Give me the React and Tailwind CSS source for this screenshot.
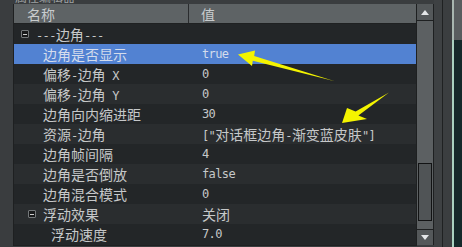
import React from "react";

const rows = [
  { name: "---边角---", value: "", indent: 22, toggle: 7, dark: true },
  { name: "边角是否显示", value: "true", indent: 29, selected: true },
  { name: "偏移-边角 X", value: "0", indent: 29, dark: true },
  { name: "偏移-边角 Y", value: "0", indent: 29 },
  { name: "边角向内缩进距", value: "30", indent: 29, dark: true },
  { name: "资源-边角", value: '["对话框边角-渐变蓝皮肤"]', indent: 29 },
  { name: "边角帧间隔", value: "4", indent: 29, dark: true },
  { name: "边角是否倒放", value: "false", indent: 29 },
  { name: "边角混合模式", value: "0", indent: 29, dark: true },
  { name: "浮动效果", value: "关闭", indent: 29, toggle: 14 },
  { name: "浮动速度", value: "7.0", indent: 37, dark: true },
];

// CJK runs get a wider font than the latin / digit runs
function T({ text }) {
  const parts = text.split(/([\u3000-\u9fff\uff00-\uffef]+)/).filter(Boolean);
  return (
    <span className="flex items-baseline whitespace-pre leading-none">
      {parts.map((p, i) =>
        /[\u3000-\u9fff\uff00-\uffef]/.test(p) ? (
          <span key={i} className="font-['Noto_Sans_CJK_SC',sans-serif] text-[14px] leading-none">
            {p}
          </span>
        ) : (
          <span
            key={i}
            className="font-['DejaVu_Sans_Mono',monospace] text-[12px] tracking-[-0.6px] leading-none"
          >
            {p}
          </span>
        )
      )}
    </span>
  );
}

function Minus() {
  return (
    <span className="w-[8px] h-[8px] border border-[#74787a] bg-[#18191a] rounded-[1px] flex items-center justify-center">
      <span className="w-[4px] h-[1px] bg-[#d0d0d0]" />
    </span>
  );
}

function Row({ row }) {
  const bg = row.selected ? "bg-[#5282d2]" : row.dark ? "bg-[#232628]" : "bg-[#2a2d2f]";
  const color = row.selected ? "text-[#d4dcec]" : "text-[#c6c8c9]";
  return (
    <div className={`relative h-[20px] flex items-center ${bg} ${color}`}>
      {row.toggle && (
        <span className="absolute top-[6px]" style={{ left: row.toggle }}>
          <Minus />
        </span>
      )}
      <div className="w-[188px] shrink-0 flex items-center" style={{ paddingLeft: row.indent }}>
        <T text={row.name} />
      </div>
      <T text={row.value} />
    </div>
  );
}

function Triangle({ up }) {
  return (
    <svg width="8" height="5" viewBox="0 0 8 5">
      <polygon points={up ? "4,0 8,5 0,5" : "0,0 8,0 4,5"} fill="#e4e6e8" />
    </svg>
  );
}

export default function App() {
  return (
    <div className="relative w-[462px] h-[247px] bg-[#3a3d3f] flex overflow-hidden">
      <div className="w-[434px] flex flex-col">
        <div className="h-[4px] overflow-hidden pl-[15px]">
          <div className="-mt-[10px] text-[#9ea2a4] font-['Noto_Sans_CJK_SC',sans-serif] text-[12px] leading-[14px]">
            属性编辑器
          </div>
        </div>
        <div className="flex h-[241px]">
          <div className="w-[13px] bg-[#3a3d3f] border-r border-[#1e2021] box-content" />
          <div className="w-[402px] flex flex-col bg-[#232628]">
            <div className="h-[20px] bg-[#5e6365] border-b border-[#1f2122] flex text-[#c8ccce]">
              <div className="w-[175px] border-r border-[#2a2c2e] flex items-center pl-[13px]">
                <T text="名称" />
              </div>
              <div className="flex items-center pl-[12px]">
                <T text="值" />
              </div>
            </div>
            {rows.map((r, i) => (
              <Row key={i} row={r} />
            ))}
          </div>
          <div className="w-[16px] border-l border-r border-[#1e2021] box-content bg-[#5c6062] flex flex-col">
            <div className="h-[17px] bg-[#54585a] border-b border-[#1e2021] flex items-center justify-center">
              <Triangle up />
            </div>
            <div className="flex-1 flex flex-col px-[1px]">
              <div className="h-[142px]" />
              <div className="h-[58px] border border-[#121314] bg-[#505456]" />
            </div>
            <div className="h-[16px] bg-[#54585a] border-t border-[#1e2021] flex items-center justify-center">
              <Triangle />
            </div>
          </div>
        </div>
        <div className="flex-1 border-t border-[#1e2021] ml-[13px] w-[404px]" />
      </div>
      <div className="w-[8px] bg-[#3e4143]" />
      <div className="w-[1px] bg-[#1f2122]" />
      <div className="w-[9px] bg-[#3b3e40]" />
      <div className="flex flex-col w-[10px]">
        <div className="h-[40px] bg-[#595d5f] flex">
          <div className="w-[2px] bg-[#a8b6b0]" />
        </div>
        <div className="flex-1 flex bg-[#15292a]">
          <div className="w-[2px] bg-[#a9d2c0]" />
        </div>
      </div>

      <svg className="absolute left-0 top-0 pointer-events-none" width="462" height="247">
        <polygon
          points="238,54.5 255,50.5 254.2,55.9 334,81 252.8,60.7 252,66"
          fill="#f4f400"
        />
        <polygon
          points="342,123 347,108 355.6,111.4 389,92.5 358.4,115.6 367,119"
          fill="#f4f400"
        />
      </svg>
    </div>
  );
}
